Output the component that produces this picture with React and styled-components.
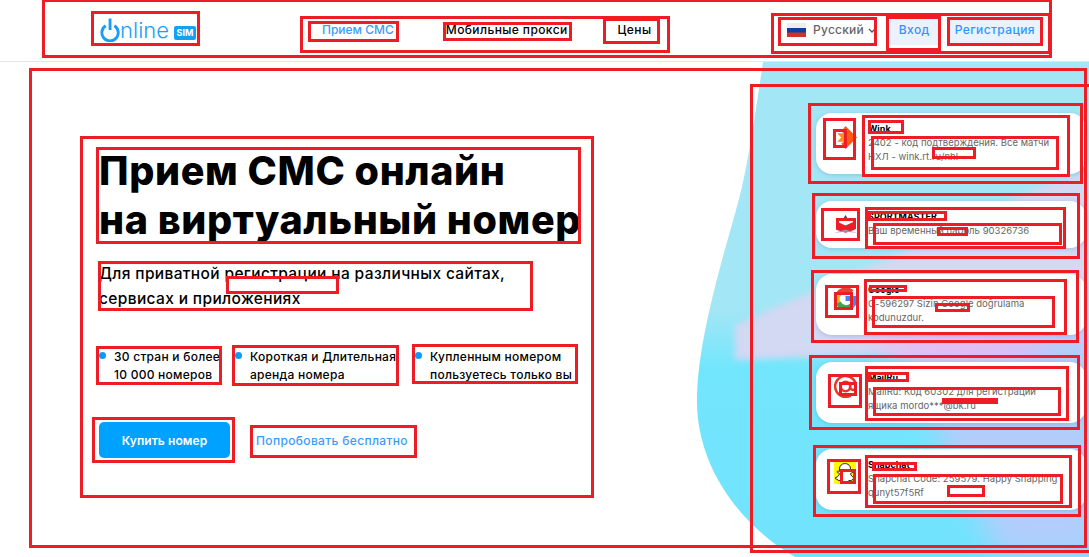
import styled, { createGlobalStyle } from "styled-components";
import { FaSnapchatGhost } from "react-icons/fa";

const GlobalStyle = createGlobalStyle`
  html, body {
    margin: 0;
    padding: 0;
    background: #fff;
  }
  * {
    box-sizing: border-box;
  }
`;

const Page = styled.div`
  position: relative;
  width: 1089px;
  height: 557px;
  overflow: hidden;
  font-family: Inter, "Noto Sans", sans-serif;
  color: #000;
`;

const Header = styled.header`
  height: 62px;
  padding: 0 49px 2px 100px;
  display: flex;
  align-items: center;
  border-bottom: 1px solid #e6e6e4;
`;

const Logo = styled.div`
  width: 96px;
  display: flex;
  align-items: flex-end;
  color: #1a9ef5;
`;

const LogoWord = styled.span`
  font-size: 22px;
  font-weight: 300;
  line-height: 24px;
`;

const LogoBadge = styled.span`
  margin: 0 0 2px 5px;
  width: 23px;
  height: 14px;
  border-radius: 2px;
  background: #16a0f5;
  color: #fff;
  font-size: 9px;
  font-weight: 700;
  line-height: 14px;
  text-align: center;
`;

const Nav = styled.nav`
  margin-left: 126px;
  display: flex;
  align-items: center;
`;

const NavLink = styled.a`
  font-size: 12px;
  font-weight: 500;
  letter-spacing: ${(p) => (p.$active ? "0" : "0.4px")};
  color: ${(p) => (p.$active ? "#3a9dfb" : "#000")};
  margin-left: ${(p) => p.$gap}px;
`;

const Tools = styled.div`
  margin-left: auto;
  display: flex;
  align-items: center;
`;

const Lang = styled.div`
  display: flex;
  align-items: center;
  margin-right: 13px;
  font-size: 12px;
  font-weight: 500;
  letter-spacing: 0.2px;
  color: #666;
`;

const Flag = styled.svg`
  width: 19px;
  height: 14px;
  margin-right: 7px;
`;

const Chevron = styled.svg`
  width: 8px;
  height: 5px;
  margin: 2px 0 0 4px;
`;

const SoftButton = styled.button`
  height: 30px;
  padding: 0 ${(p) => p.$pad}px;
  margin-left: ${(p) => p.$gap}px;
  border: 0;
  border-radius: 2px;
  background: #eaf2fe;
  color: #2f97fb;
  font-family: inherit;
  font-size: 12px;
  font-weight: 500;
  letter-spacing: 0.4px;
`;

const Main = styled.main`
  position: relative;
  height: 495px;
  padding: 85px 3px 0 99px;
  display: flex;
  justify-content: space-between;
  align-items: flex-start;
`;

const Backdrop = styled.svg`
  position: absolute;
  left: 0;
  top: 0;
  width: 1089px;
  height: 495px;
`;

const Intro = styled.section`
  position: relative;
  width: 490px;
`;

const Title = styled.h1`
  margin: 0;
  font-size: 39.5px;
  font-weight: 800;
  line-height: 49px;
  letter-spacing: 0.6px;
  white-space: nowrap;
`;

const Lead = styled.p`
  margin: 17px 0 0;
  font-size: 15.5px;
  font-weight: 500;
  line-height: 24.5px;
  letter-spacing: 0.36px;
`;

const Points = styled.ul`
  margin: 37px 0 0;
  padding: 0;
  list-style: none;
  display: flex;
`;

const Point = styled.li`
  width: ${(p) => p.$w}px;
  flex: none;
  display: flex;
  font-size: 12px;
  font-weight: 500;
  line-height: 18px;
  letter-spacing: 0.25px;
  white-space: nowrap;
`;

const Dot = styled.i`
  flex: none;
  width: 7px;
  height: 7px;
  margin: 4px 8px 0 0;
  border-radius: 50%;
  background: #0b9bf7;
`;

const Actions = styled.div`
  margin-top: 38px;
  display: flex;
  align-items: center;
`;

const BuyButton = styled.button`
  width: 131px;
  height: 36px;
  border: 0;
  border-radius: 5px;
  background: #00a2ff;
  color: #fff;
  font-family: inherit;
  font-size: 12px;
  font-weight: 600;
  letter-spacing: 0.1px;
`;

const TryLink = styled.a`
  margin-left: 26px;
  font-size: 12px;
  font-weight: 500;
  letter-spacing: 0.35px;
  color: #3a9dfb;
`;

const Feed = styled.section`
  position: relative;
  width: 270px;
  margin-top: -34px;
  display: flex;
  flex-direction: column;
  gap: 26.6px;
`;

const Card = styled.article`
  display: flex;
  padding: 9px 0 10px;
  border-radius: 16px;
  background: #fff;
  box-shadow: 0 1px 4px rgba(70, 110, 170, 0.28);
`;

const CardIcon = styled.div`
  flex: none;
  width: 52px;
  padding: 4px 0 0 18px;
`;

const AppLogo = styled.svg`
  display: block;
  width: 23px;
  height: 23px;
`;

const SnapTile = styled.div`
  width: 22px;
  height: 22px;
  display: flex;
  align-items: center;
  justify-content: center;
  background: #fffc00;
  color: #fff;
  font-size: 20px;

  svg {
    stroke: #000;
    stroke-width: 22px;
  }
`;

const CardBody = styled.div`
  min-width: 0;
`;

const CardTitle = styled.h3`
  margin: 0;
  font-size: 9px;
  font-weight: 700;
  line-height: 14px;
`;

const CardText = styled.p`
  margin: 0;
  font-size: 9.5px;
  line-height: 14px;
  letter-spacing: 0.03px;
  color: #666;
  white-space: nowrap;
`;

const Marks = styled.div`
  position: absolute;
  left: 0;
  top: 0;
  width: 100%;
  height: 100%;
  pointer-events: none;
`;

const Mark = styled.div`
  position: absolute;
  left: ${(p) => p.$box[0]}px;
  top: ${(p) => p.$box[1]}px;
  width: ${(p) => p.$box[2] - p.$box[0]}px;
  height: ${(p) => p.$box[3] - p.$box[1]}px;
  border: 3px solid #ee1c25;
`;

const boxes = [
  [42, -1, 1052, 58],
  [91, 11, 200, 46],
  [300, 16, 670, 53],
  [308, 21, 399, 42],
  [443, 22, 572, 41],
  [603, 18, 660, 44],
  [771, 13, 1051, 54],
  [778, 17, 877, 46],
  [886, 16, 941, 51],
  [947, 17, 1043, 46],
  [29, 68, 1087, 548],
  [750, 84, 1092, 553],
  [80, 136, 594, 498],
  [96, 147, 581, 244],
  [98, 261, 533, 311],
  [226, 276, 339, 294],
  [96, 346, 222, 385],
  [232, 345, 399, 386],
  [412, 344, 578, 384],
  [92, 417, 235, 463],
  [250, 425, 417, 458],
  [808, 103, 1083, 184],
  [823, 118, 856, 160],
  [833, 129, 847, 148],
  [862, 115, 1070, 177],
  [868, 120, 904, 134],
  [871, 136, 1059, 170],
  [932, 147, 976, 159],
  [812, 193, 1080, 259],
  [821, 208, 860, 241],
  [836, 218, 856, 229],
  [865, 207, 1066, 249],
  [868, 211, 947, 221],
  [873, 223, 1062, 245],
  [937, 227, 968, 236],
  [811, 270, 1079, 343],
  [825, 285, 859, 318],
  [834, 292, 853, 310],
  [864, 279, 1067, 335],
  [869, 285, 907, 292],
  [872, 296, 1055, 328],
  [935, 303, 970, 312],
  [809, 355, 1080, 430],
  [828, 374, 862, 408],
  [839, 382, 857, 396],
  [865, 366, 1069, 421],
  [868, 372, 909, 382],
  [873, 387, 1061, 416],
  [942, 398, 998, 404],
  [813, 445, 1081, 517],
  [827, 459, 861, 494],
  [840, 469, 856, 484],
  [865, 455, 1072, 508],
  [872, 462, 917, 471],
  [873, 474, 1063, 504],
  [947, 485, 985, 497],
];

const PowerLogo = () => (
  <svg width="21" height="24" viewBox="0 0 21 24">
    <path d="M6 7.5a8.6 8.6 0 1 0 9 0" fill="none" stroke="#1a9ef5" strokeWidth="3" />
    <path d="M10.5 0v12" stroke="#1a9ef5" strokeWidth="3" />
  </svg>
);

const WinkLogo = () => (
  <AppLogo viewBox="0 0 22 22">
    <path d="M11 0l11 11-11 11-4-5 6-6-6-6z" fill="#ff5a12" />
    <path d="M3 7h6l4 4-4 4H3l4-4z" fill="#ff8a1e" />
  </AppLogo>
);

const SportLogo = () => (
  <AppLogo viewBox="0 0 22 22">
    <path d="M11 1l3 5H8z" fill="#2c4a8c" />
    <path d="M2 7l9 4 9-4v8l-9 3-9-3z" fill="#e1232e" />
    <path d="M0 18l11-3 11 3-11-1z" fill="#8ba0c6" />
  </AppLogo>
);

const GoogleLogo = () => (
  <AppLogo viewBox="0 0 22 22" fill="none" strokeWidth="5">
    <path d="M4 7a8.5 8.5 0 0 1 13-2" stroke="#ea4335" />
    <path d="M4 7a8.5 8.5 0 0 0 0 8" stroke="#fbbc05" />
    <path d="M4 15a8.5 8.5 0 0 0 14 2" stroke="#34a853" />
    <path d="M18 17a8.5 8.5 0 0 0 2-6h-9" stroke="#4285f4" />
  </AppLogo>
);

const MailLogo = () => (
  <AppLogo viewBox="0 0 22 22" fill="none" stroke="#e9362c" strokeWidth="2.4">
    <circle cx="11" cy="11" r="4.5" />
    <path d="M15.5 6.5v6a3 3 0 0 0 5.5 0A10 10 0 1 0 16 19.7" />
  </AppLogo>
);

const SnapLogo = () => (
  <SnapTile>
    <FaSnapchatGhost />
  </SnapTile>
);

const messages = [
  {
    name: "Wink",
    logo: <WinkLogo />,
    text: ["2402 - код подтверждения. Все матчи", "НХЛ - wink.rt.ru/nhl"],
  },
  {
    name: "SPORTMASTER",
    logo: <SportLogo />,
    text: ["Ваш временный пароль 90326736"],
  },
  {
    name: "Google",
    logo: <GoogleLogo />,
    text: ["G-596297 Sizin Google doğrulama", "kodunuzdur."],
  },
  {
    name: "MailRu",
    logo: <MailLogo />,
    text: ["MailRu: Код 60302 для регистрации", "ящика mordo***@bk.ru"],
  },
  {
    name: "Snapchat",
    logo: <SnapLogo />,
    text: ["Snapchat Code: 259579. Happy Snapping", "qunyt57f5Rf"],
  },
];

const BLOB = "M763 0 C757 40 750 90 742 125 C730 175 697 270 697 340 C697 400 735 460 795 495 L1089 495 L1089 0 Z";

export default function App() {
  return (
    <Page>
      <GlobalStyle />
      <Header>
        <Logo>
          <PowerLogo />
          <LogoWord>nline</LogoWord>
          <LogoBadge>SIM</LogoBadge>
        </Logo>
        <Nav>
          <NavLink $active $gap={0}>Прием СМС</NavLink>
          <NavLink $gap={52}>Мобильные прокси</NavLink>
          <NavLink $gap={50}>Цены</NavLink>
        </Nav>
        <Tools>
          <Lang>
            <Flag viewBox="0 0 19 14">
              <rect width="19" height="5" fill="#eee" />
              <rect y="5" width="19" height="5" fill="#0b3fa8" />
              <rect y="9.5" width="19" height="4.5" fill="#d3302a" />
            </Flag>
            Русский
            <Chevron viewBox="0 0 8 5">
              <path d="M1 1l3 3 3-3" fill="none" stroke="#555" strokeWidth="1.3" />
            </Chevron>
          </Lang>
          <SoftButton $pad={10} $gap={0}>Вход</SoftButton>
          <SoftButton $pad={5} $gap={10}>Регистрация</SoftButton>
        </Tools>
      </Header>
      <Main>
        <Backdrop viewBox="0 0 1089 495">
          <defs>
            <clipPath id="blob">
              <path d={BLOB} />
            </clipPath>
            <filter id="soft" x="-30%" y="-30%" width="160%" height="160%">
              <feGaussianBlur stdDeviation="14" />
            </filter>
            <filter id="softer" x="-30%" y="-30%" width="160%" height="160%">
              <feGaussianBlur stdDeviation="3" />
            </filter>
            <linearGradient id="base" x1="0" y1="0" x2="0" y2="1">
              <stop offset="0.5" stopColor="#a3e6f5" />
              <stop offset="0.62" stopColor="#72e6fd" />
              <stop offset="1" stopColor="#72e3fd" />
            </linearGradient>
          </defs>
          <g clipPath="url(#blob)">
            <rect x="690" width="400" height="495" fill="url(#base)" />
            <path d="M1100 104 L1033 128 L887 198 L735 263 L735 298 L880 292 L1100 320 Z" fill="#d3d8f3" filter="url(#softer)" />
            <path d="M900 295 L1100 260 L1100 495 L1000 495 Z" fill="#b2cdfb" filter="url(#soft)" />
            <ellipse cx="960" cy="284" rx="90" ry="12" fill="#f4b0f0" filter="url(#soft)" />
          </g>
        </Backdrop>
        <Intro>
          <Title>
            Прием СМС онлайн
            <br />
            на виртуальный номер
          </Title>
          <Lead>
            Для приватной регистрации на различных сайтах,
            <br />
            сервисах и приложениях
          </Lead>
          <Points>
            <Point $w={136}>
              <Dot />
              <span>
                30 стран и более
                <br />
                10 000 номеров
              </span>
            </Point>
            <Point $w={180}>
              <Dot />
              <span>
                Короткая и Длительная
                <br />
                аренда номера
              </span>
            </Point>
            <Point $w={170}>
              <Dot />
              <span>
                Купленным номером
                <br />
                пользуетесь только вы
              </span>
            </Point>
          </Points>
          <Actions>
            <BuyButton>Купить номер</BuyButton>
            <TryLink>Попробовать бесплатно</TryLink>
          </Actions>
        </Intro>
        <Feed>
          {messages.map((m) => (
            <Card key={m.name}>
              <CardIcon>{m.logo}</CardIcon>
              <CardBody>
                <CardTitle>{m.name}</CardTitle>
                {m.text.map((line) => (
                  <CardText key={line}>{line}</CardText>
                ))}
              </CardBody>
            </Card>
          ))}
        </Feed>
      </Main>
      <Marks>
        {boxes.map((box) => (
          <Mark key={box.join()} $box={box} />
        ))}
      </Marks>
    </Page>
  );
}
